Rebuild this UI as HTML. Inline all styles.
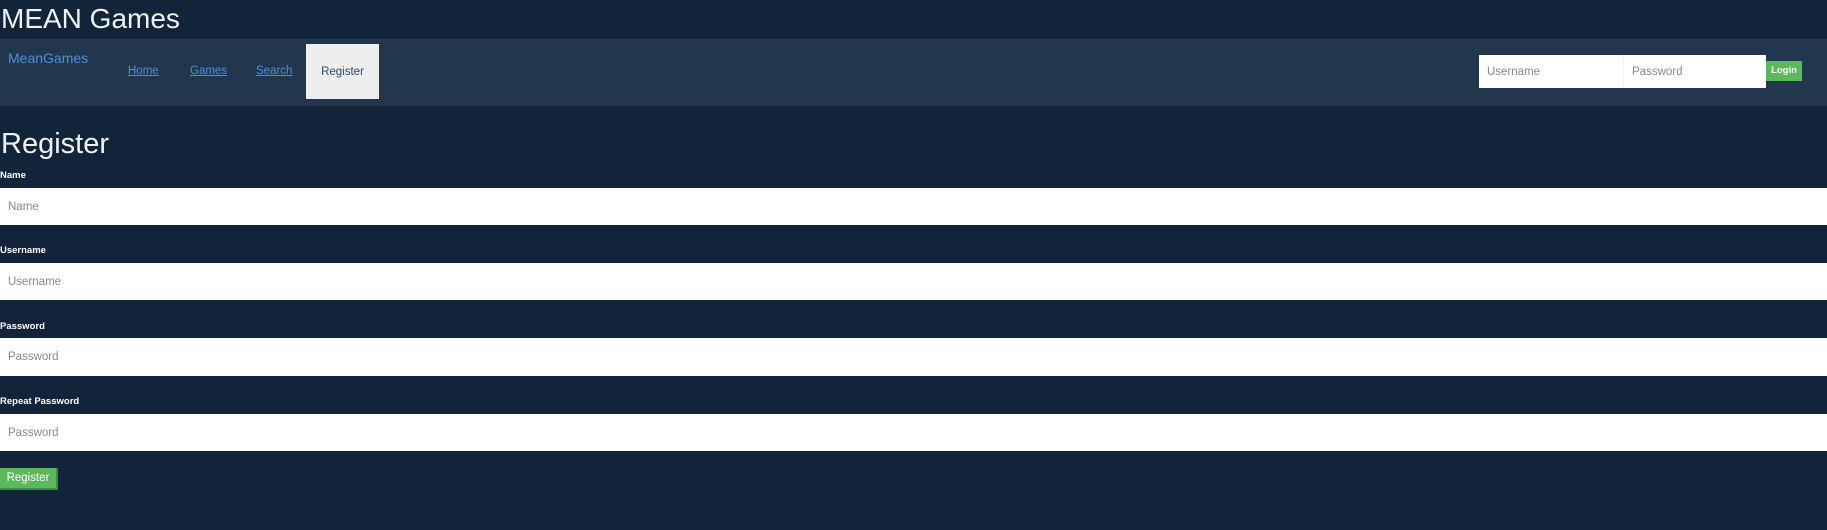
<!DOCTYPE html>
<html><head><style>
body{margin:0;background:#11243a;font-family:"Liberation Sans",sans-serif;width:1827px;height:530px;overflow:hidden;position:relative;color:#fff}
.a{position:absolute}
.t{left:1px;top:1px;font-size:28px;line-height:36px;color:#f2f2f2}
.nav{left:0;top:39px;width:1827px;height:67px;background:#22374d}
.brand{left:8px;top:50px;font-size:14px;color:#4a90e2}
.lk{top:65px;font-size:11.5px;color:#4a90e2;text-decoration:underline}
.tab{left:306px;top:44px;width:73px;height:55px;background:#eeeeee;color:#2c4a6b;font-size:11.5px;line-height:56px;text-align:center}
.inp{background:#fff;color:#888;font-size:11.5px;box-sizing:border-box;padding-left:8px}
.lbl{left:0;font-size:9.5px;font-weight:bold;color:#fff}
.h{left:1px;top:128px;font-size:29px;color:#f2f2f2}
.btn{background:#5cb85c;color:#fff;font-size:11.5px;text-align:center}
</style></head><body>
<div class="a t">MEAN Games</div>
<div class="a nav"></div>
<div class="a brand">MeanGames</div>
<div class="a lk" style="left:128px">Home</div>
<div class="a lk" style="left:190px">Games</div>
<div class="a lk" style="left:256px">Search</div>
<div class="a tab">Register</div>
<div class="a inp" style="left:1479px;top:55px;width:144px;height:33px;line-height:34px">Username</div>
<div class="a inp" style="left:1623px;top:55px;width:143px;height:33px;line-height:34px;border-left:1px solid #f3f3f3">Password</div>
<div class="a btn" style="left:1766px;top:61px;width:36px;height:20px;line-height:20px;font-size:9.5px;font-weight:bold">Login</div>
<div class="a h">Register</div>
<div class="a lbl" style="top:170px">Name</div>
<div class="a inp" style="left:0;top:188px;width:1827px;height:37px;line-height:38px">Name</div>
<div class="a lbl" style="top:245px">Username</div>
<div class="a inp" style="left:0;top:263px;width:1827px;height:37px;line-height:38px">Username</div>
<div class="a lbl" style="top:321px">Password</div>
<div class="a inp" style="left:0;top:338px;width:1827px;height:38px;line-height:39px">Password</div>
<div class="a lbl" style="top:396px">Repeat Password</div>
<div class="a inp" style="left:0;top:414px;width:1827px;height:37px;line-height:38px">Password</div>
<div class="a btn" style="left:0;top:468px;width:56px;height:20px;line-height:21px;border-right:2px solid #3d8b3d;border-bottom:2px solid #3d8b3d">Register</div>
</body></html>
